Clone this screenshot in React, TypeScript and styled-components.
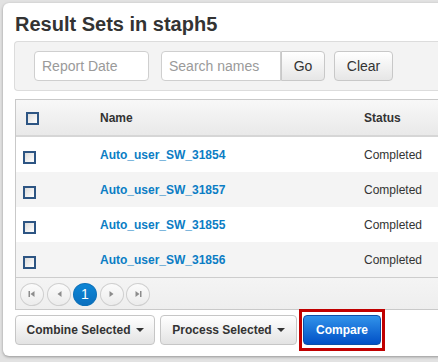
import styled, { createGlobalStyle } from "styled-components";

const GlobalStyle = createGlobalStyle`
  html, body { margin: 0; padding: 0; }
  body {
    background: #e2e2e2;
    overflow: hidden;
    font-family: "Liberation Sans", Arial, sans-serif;
  }
`;

const Viewport = styled.div`
  width: 100vw;
  height: 100vh;
  overflow: hidden;
  padding: 3px 0 0 3px;
  box-sizing: border-box;
`;

const Panel = styled.div`
  width: 480px;
  height: 353px;
  box-sizing: border-box;
  padding-left: 11px;
  background: #fff;
  border-radius: 6px;
  box-shadow: 0 1px 3px rgba(0, 0, 0, 0.35);
`;

const Title = styled.h1`
  margin: 0 0 0 1px;
  height: 38px;
  box-sizing: border-box;
  padding-top: 9px;
  font-size: 20px;
  line-height: 24px;
  font-weight: bold;
  color: #333;
`;

const FilterBar = styled.div`
  display: flex;
  align-items: flex-start;
  height: 50px;
  box-sizing: border-box;
  padding: 9px 0 0 19px;
  background: #f3f3f3;
  border: 1px solid #dcdcdc;
  border-right: none;
  border-radius: 4px 0 0 4px;
`;

const TextInput = styled.input<{ $w: number; $joined?: boolean }>`
  width: ${(p) => p.$w}px;
  height: 30px;
  box-sizing: border-box;
  margin: 0 ${(p) => (p.$joined ? 0 : 12)}px 0 0;
  padding: 0 7px;
  border: 1px solid #cfcfcf;
  border-radius: ${(p) => (p.$joined ? "4px 0 0 4px" : "4px")};
  background: #fff;
  font-family: inherit;
  font-size: 14px;
  color: #333;
  outline: none;
  &::placeholder { color: #9a9a9a; }
`;

const BarButton = styled.button<{ $w: number; $joined?: boolean }>`
  width: ${(p) => p.$w}px;
  height: 30px;
  box-sizing: border-box;
  margin-left: ${(p) => (p.$joined ? 0 : 9)}px;
  padding: 0;
  border: 1px solid #c8c8c8;
  border-radius: ${(p) => (p.$joined ? "0 4px 4px 0" : "4px")};
  background: linear-gradient(#ffffff, #e6e6e6);
  font-family: inherit;
  font-size: 14px;
  color: #333;
`;

const Table = styled.div`
  margin: 8px 0 0 1px;
  border: 1px solid #c9c9c9;
  border-right: none;
`;

const cols = "84px 264px 1fr";

const HeadRow = styled.div`
  display: grid;
  grid-template-columns: ${cols};
  align-items: center;
  height: 37px;
  box-sizing: border-box;
  border-bottom: 2px solid #d6d6d6;
  background: linear-gradient(#f8f8f8, #e9e9e9);
  font-size: 12px;
  font-weight: bold;
  color: #333;
`;

const Row = styled.div<{ $alt: boolean }>`
  display: grid;
  grid-template-columns: ${cols};
  align-items: center;
  height: 35px;
  background: ${(p) => (p.$alt ? "#f4f4f4" : "#fff")};
  font-size: 12px;
  color: #333;
`;

const Check = styled.span<{ $head?: boolean }>`
  display: block;
  width: 13px;
  height: 13px;
  box-sizing: border-box;
  margin: ${(p) => (p.$head ? "2px 0 0 10px" : "6px 0 0 7px")};
  border: 2px solid #2d5583;
  background: linear-gradient(135deg, #dcdcdc, #ffffff);
`;

const NameLink = styled.a`
  font-weight: bold;
  color: #0b7dc4;
  text-decoration: none;
`;

const Pager = styled.div`
  display: flex;
  align-items: center;
  gap: 2.5px;
  height: 32px;
  box-sizing: border-box;
  padding: 1px 0 0 4px;
  border-top: 1px solid #cdcdcd;
  background: linear-gradient(#f4f4f4, #eeeeee);
`;

const PageDot = styled.span<{ $active?: boolean }>`
  display: flex;
  align-items: center;
  justify-content: center;
  width: 24px;
  height: 23px;
  box-sizing: border-box;
  border-radius: 50%;
  border: 1px solid ${(p) => (p.$active ? "#0a6fb8" : "#cfcfcf")};
  background: ${(p) => (p.$active ? "linear-gradient(#0d86d6, #0a6fbe)" : "linear-gradient(#fbfbfb, #ececec)")};
  color: #fff;
  font-size: 14px;
`;

const Actions = styled.div`
  display: flex;
  margin: 5px 0 0 1px;
`;

const ActionButton = styled.button<{ $w: number; $gap: number }>`
  display: flex;
  align-items: center;
  justify-content: center;
  width: ${(p) => p.$w}px;
  height: 30px;
  box-sizing: border-box;
  margin-left: ${(p) => p.$gap}px;
  padding: 0;
  border: 1px solid #c6c6c6;
  border-radius: 4px;
  background: linear-gradient(#ffffff, #e3e3e3);
  font-family: inherit;
  font-size: 12px;
  font-weight: bold;
  color: #333;
`;

const Caret = styled.span`
  margin-left: 5px;
  border-top: 4px solid #333;
  border-left: 4px solid transparent;
  border-right: 4px solid transparent;
`;

const Highlight = styled.div`
  position: relative;
  margin-left: 6px;
  &::after {
    content: "";
    position: absolute;
    inset: -6px -4px;
    border: 3px solid #c00000;
    pointer-events: none;
  }
`;

const PrimaryButton = styled.button`
  width: 78px;
  height: 30px;
  box-sizing: border-box;
  padding: 0;
  border: 1px solid #0b4ea6;
  border-radius: 4px;
  background: linear-gradient(#3193ea, #0150c6);
  font-family: inherit;
  font-size: 12px;
  font-weight: bold;
  color: #fff;
`;

const rows = ["Auto_user_SW_31854", "Auto_user_SW_31857", "Auto_user_SW_31855", "Auto_user_SW_31856"];

function PagerIcon({ kind }: { kind: "first" | "prev" | "next" | "last" }) {
  const left = kind === "first" || kind === "prev";
  const bar = kind === "first" || kind === "last";
  return (
    <svg width="8" height="8" viewBox="0 0 8 8">
      {left ? <path d="M6.5 1 L2.5 4 L6.5 7 Z" fill="#8c8c8c" /> : <path d="M1.5 1 L5.5 4 L1.5 7 Z" fill="#8c8c8c" />}
      {bar && (left ? <rect x="0.5" y="1" width="1.5" height="6" fill="#8c8c8c" /> : <rect x="6" y="1" width="1.5" height="6" fill="#8c8c8c" />)}
    </svg>
  );
}

export default function App() {
  return (
    <>
      <GlobalStyle />
      <Viewport>
        <Panel>
          <Title>Result Sets in staph5</Title>
          <FilterBar>
            <TextInput $w={115} placeholder="Report Date" />
            <TextInput $w={120} $joined placeholder="Search names" />
            <BarButton $w={44} $joined>Go</BarButton>
            <BarButton $w={59}>Clear</BarButton>
          </FilterBar>
          <Table>
            <HeadRow>
              <div><Check $head /></div>
              <div>Name</div>
              <div>Status</div>
            </HeadRow>
            {rows.map((name, i) => (
              <Row key={name} $alt={i % 2 === 1}>
                <div><Check /></div>
                <div><NameLink href="#">{name}</NameLink></div>
                <div>Completed</div>
              </Row>
            ))}
            <Pager>
              <PageDot><PagerIcon kind="first" /></PageDot>
              <PageDot><PagerIcon kind="prev" /></PageDot>
              <PageDot $active>1</PageDot>
              <PageDot><PagerIcon kind="next" /></PageDot>
              <PageDot><PagerIcon kind="last" /></PageDot>
            </Pager>
          </Table>
          <Actions>
            <ActionButton $w={140} $gap={0}>Combine Selected<Caret /></ActionButton>
            <ActionButton $w={137} $gap={5}>Process Selected<Caret /></ActionButton>
            <Highlight>
              <PrimaryButton>Compare</PrimaryButton>
            </Highlight>
          </Actions>
        </Panel>
      </Viewport>
    </>
  );
}
